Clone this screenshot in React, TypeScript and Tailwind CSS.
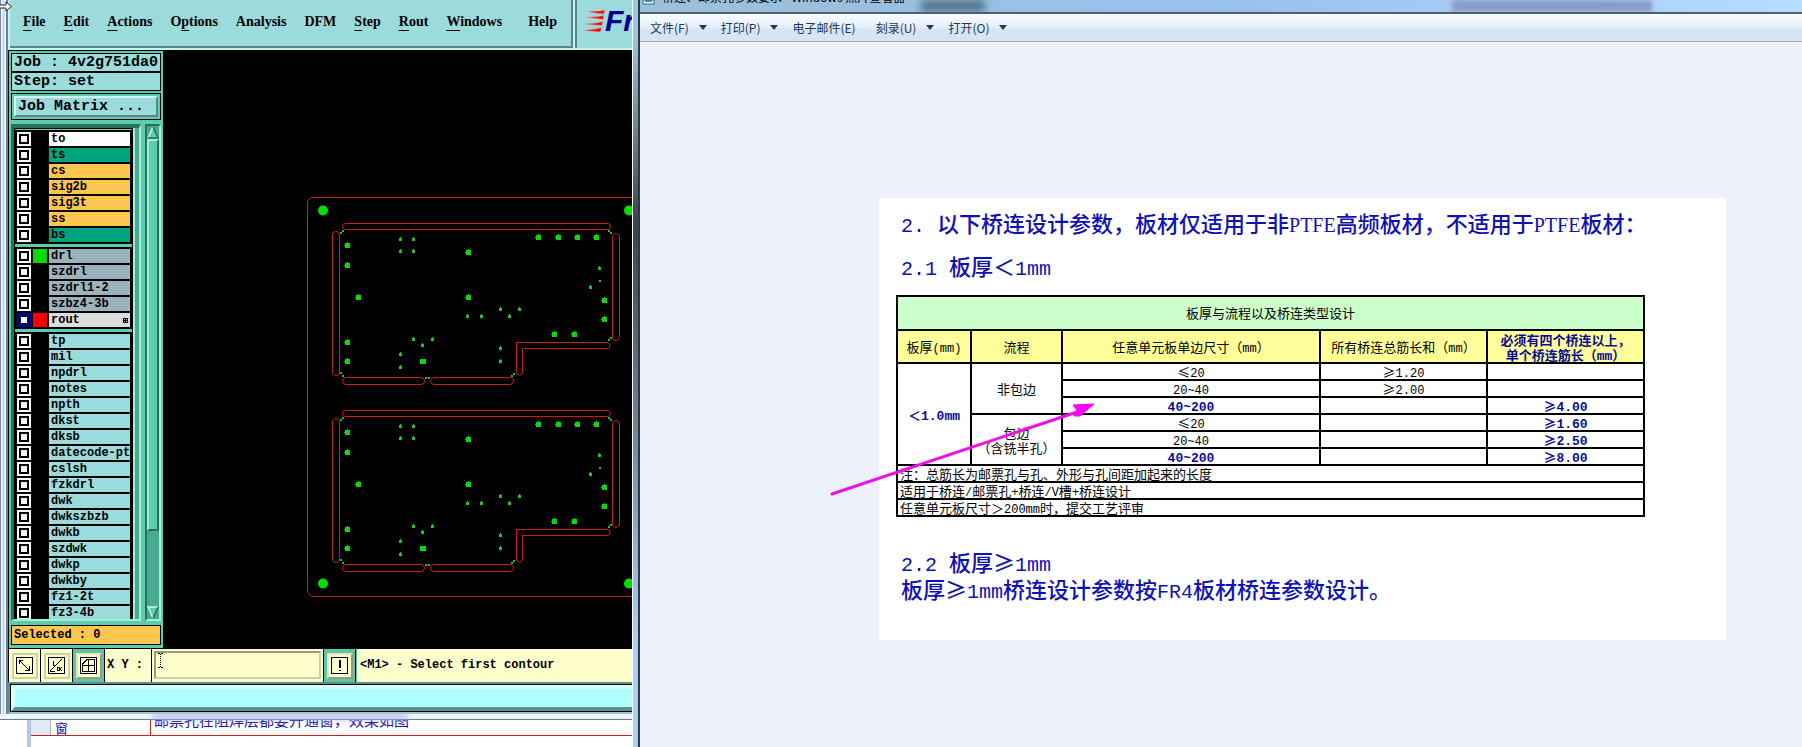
import React from "react";

const MONO = "font-['Liberation_Mono',monospace]";
const CJK = "font-['Noto_Sans_CJK_SC',sans-serif]";

type Layer = { name: string; fill: string; swatch?: string; active?: boolean };

const TEAL = "bg-[#00a47c]";
const AMBER = "bg-[#fdc64f]";
const SLATE = "bg-[#9cb3bd]";
const AQUA = "bg-[#9cdbdb]";

const groups: Layer[][] = [
  [
    { name: "to", fill: "bg-white" },
    { name: "ts", fill: TEAL },
    { name: "cs", fill: AMBER },
    { name: "sig2b", fill: AMBER },
    { name: "sig3t", fill: AMBER },
    { name: "ss", fill: AMBER },
    { name: "bs", fill: TEAL },
  ],
  [
    { name: "drl", fill: SLATE, swatch: "bg-[#00dc00]" },
    { name: "szdrl", fill: SLATE },
    { name: "szdrl1-2", fill: SLATE },
    { name: "szbz4-3b", fill: SLATE },
    { name: "rout", fill: "bg-[#dcdcdc]", swatch: "bg-[#fb0000]", active: true },
  ],
  [
    "tp", "mil", "npdrl", "notes", "npth", "dkst", "dksb", "datecode-ptc", "cslsh",
    "fzkdrl", "dwk", "dwkszbzb", "dwkb", "szdwk", "dwkp", "dwkby", "fz1-2t", "fz3-4b",
  ].map((name) => ({ name, fill: AQUA })),
];

const menus: { label: string; key?: number; extra?: string }[] = [
  { label: "File", key: 0 },
  { label: "Edit", key: 0 },
  { label: "Actions", key: 0 },
  { label: "Options", key: 1 },
  { label: "Analysis" },
  { label: "DFM" },
  { label: "Step", key: 0 },
  { label: "Rout", key: 0 },
  { label: "Windows", key: 0 },
  { label: "Help", extra: "ml-2" },
];

function MenuLabel({ label, at }: { label: string; at?: number }) {
  if (at === undefined) return <>{label}</>;
  return (
    <>
      {label.slice(0, at)}
      <span className="underline decoration-1 underline-offset-4 [text-decoration-skip-ink:none]">{label[at]}</span>
      {label.slice(at + 1)}
    </>
  );
}

function MenuBar() {
  return (
    <header className="flex h-[50px] shrink-0 bg-[#9cdbdb]">
      <div className="flex grow border-b-2 border-l-2 border-[#c6f3f3]">
        <nav className="flex grow gap-[18px] border-r-2 border-b-2 border-[#5c8686] pt-2.5 pl-[13px]">
          {menus.map((m) => (
            <button
              key={m.label}
              className={`h-6 font-['Liberation_Serif',serif] text-[14px] leading-6 font-bold text-black ${m.extra ?? ""}`}
            >
              <MenuLabel label={m.label} at={m.key} />
            </button>
          ))}
        </nav>
      </div>
      <div className="flex w-[59px] shrink-0 border-b-2 border-l-2 border-[#c6f3f3]">
        <div className="flex grow items-start overflow-hidden border-l-2 border-[#5c8686] pl-1.5">
          <svg viewBox="0 0 22 24" className="mt-[9px] h-6 w-[22px] shrink-0" aria-hidden="true">
            <g fill="#fb0a0a" stroke="#d8b8c4" strokeWidth="0.4">
              <path d="M4 2.5 16 2 22 1 21 5 15 4.5Z" />
              <path d="M3 8.5 14 7.5 21 6.5 20 10.5 13 9.5Z" />
              <path d="M1 15 13 14 20 12.5 19 16.5 12 16Z" />
              <path d="M0 21.5 12 20 18.5 18.5 17.5 23 11 22.5Z" />
            </g>
          </svg>
          <span className="font-['Liberation_Sans',sans-serif] text-[30px] leading-[42px] font-bold text-[#00008c] italic">
            Fr
          </span>
        </div>
      </div>
    </header>
  );
}

function LayerRow({ layer }: { layer: Layer }) {
  return (
    <label className="flex h-4 items-center gap-0.5">
      <span className={`flex size-3.5 shrink-0 items-center justify-center ${layer.active ? "bg-[#00009c]" : "bg-white"}`}>
        <input
          type="checkbox"
          defaultChecked={layer.active}
          className={`size-2.5 appearance-none border-2 bg-white ${layer.active ? "border-[#000050]" : "border-black"}`}
        />
      </span>
      <span className={`h-3.5 w-3.5 shrink-0 ${layer.swatch ?? "bg-black"}`} />
      <span
        className={`flex h-3.5 min-w-0 grow items-center justify-between overflow-hidden pl-0.5 text-[12px] leading-3.5 font-bold whitespace-nowrap text-black ${layer.fill}`}
      >
        {layer.name}
        {layer.active && (
          <svg viewBox="0 0 5 5" className="mr-0.5 size-[5px] shrink-0" shapeRendering="crispEdges" aria-hidden="true">
            <path d="M.5.5h4v4h-4zM2.5 0v5M0 2.5h5" fill="none" stroke="#000" />
          </svg>
        )}
      </span>
    </label>
  );
}

function Sidebar() {
  return (
    <aside className={`flex w-[155px] shrink-0 flex-col border-t border-l border-black bg-[#5ccdad] px-0.5 pt-0.5 pb-[3px] ${MONO}`}>
      <div className="shrink-0 border border-black bg-[#9cdbdb] text-[15px] leading-[17px] font-bold whitespace-pre text-black">
        <p className="border-b-2 border-black pl-0.5">Job : 4v2g751da0</p>
        <p className="pl-0.5">Step: set</p>
      </div>
      <div className="mt-0.5 shrink-0 border border-black p-0.5">
        <button className="block w-full border-2 border-t-[#d2f4f4] border-r-[#5c8686] border-b-[#5c8686] border-l-[#d2f4f4] bg-[#9cdbdb] pl-0.5 text-left text-[15px] leading-[17px] font-bold text-black">
          Job Matrix ...
        </button>
      </div>

      <div className="mt-1 flex min-h-0 grow">
        <div className="flex min-w-0 grow border-t-4 border-r-2 border-b-2 border-l-3 border-t-[#2d6f5d] border-r-[#a4eed8] border-b-[#a4eed8] border-l-[#2d6f5d]">
          <div className="min-w-0 grow overflow-hidden border-x border-t border-black pt-px">
            <div className="flex h-0 flex-col gap-[3px]">
              {groups.map((g, i) => (
                <div key={i} className="shrink-0 border-x-2 border-y border-black bg-black">
                  {g.map((l) => (
                    <LayerRow key={l.name} layer={l} />
                  ))}
                </div>
              ))}
            </div>
          </div>
          <div className="w-1.5 border-l-2 border-[#a4eed8] bg-[#48ab91]" />
        </div>
        <div className="ml-1 flex w-4 shrink-0 flex-col border-2 border-t-[#2d6f5d] border-r-[#a4eed8] border-b-[#a4eed8] border-l-[#2d6f5d] bg-[#48ab91]">
          <svg viewBox="0 0 12 13" className="h-[13px] w-3" aria-hidden="true">
            <path d="M6 1 11 12H1Z" fill="#5ccdad" />
            <path d="M6 1 1 12" stroke="#c6f7e8" strokeWidth="1.5" />
            <path d="M6 1 11 12H1" fill="none" stroke="#2d6f5d" strokeWidth="1.5" />
          </svg>
          <div className="flex grow flex-col">
            <div className="h-[84%] border-2 border-t-[#a4eed8] border-r-[#2d6f5d] border-b-[#2d6f5d] border-l-[#a4eed8] bg-[#5ccdad]" />
          </div>
          <svg viewBox="0 0 12 13" className="h-[13px] w-3" aria-hidden="true">
            <path d="M6 12 11 1H1Z" fill="#5ccdad" />
            <path d="M6 12 1 1H11" fill="none" stroke="#c6f7e8" strokeWidth="1.5" />
            <path d="M11 1 6 12" stroke="#2d6f5d" strokeWidth="1.5" />
          </svg>
        </div>
      </div>

      <p className="mt-1 shrink-0 border border-black bg-[#fdc64f] pl-0.5 text-[12px] leading-[18px] font-bold text-black">
        Selected : 0
      </p>
    </aside>
  );
}

const bigDots = [
  [347, 245], [347, 265], [358, 297], [468, 252], [468, 297], [538, 237], [558, 237], [577, 237],
  [596, 237], [604, 300], [604, 319], [554, 334], [574, 334], [347, 342], [347, 361],
];
const smallDots = [
  [400, 239], [413, 239], [400, 251], [413, 251], [599, 268], [590, 287], [467, 316], [481, 316],
  [500, 309], [519, 309], [509, 316], [413, 339], [432, 339], [422, 345], [400, 354], [400, 367],
  [500, 348], [500, 361],
];
const tinyDots = [
  [340, 232], [342, 230], [608, 230], [610, 232], [340, 372], [342, 375], [425, 377], [428, 377],
  [511, 375], [513, 373], [608, 339], [610, 337], [599, 280],
];

function Board() {
  return (
    <>
      <g fill="none" stroke="#c81e1e">
        <rect x="342.5" y="223.5" width="268" height="6" rx="3" />
        <rect x="332.5" y="231.5" width="7" height="144" rx="3.5" />
        <rect x="612.5" y="233.5" width="7" height="107" rx="3.5" />
        <rect x="342.5" y="377.5" width="82" height="7" rx="3.5" />
        <rect x="430.5" y="377.5" width="83" height="7" rx="3.5" />
        <path d="M516.5 342.5H607a3 3 0 0 1 0 6H522.5V372a3 3 0 0 1-6 0Z" />
      </g>
      <g fill="#0ed60e" shapeRendering="crispEdges">
        {bigDots.map(([x, y]) => (
          <path key={`${x}-${y}`} d={`M${x - 2} ${y - 2}h2v-1h1v1h2v5h-5v-2h-1v-1h1z`} />
        ))}
        <rect x="420" y="359" width="6" height="5" />
      </g>
      <g fill="#22c322" shapeRendering="crispEdges">
        {smallDots.map(([x, y]) => (
          <path key={`${x}-${y}`} d={`M${x - 1} ${y - 1}h1v-1h1v1h1v3h-3z`} />
        ))}
        {tinyDots.map(([x, y]) => (
          <rect key={`${x}-${y}`} x={x} y={y} width="2" height="2" />
        ))}
      </g>
    </>
  );
}

function BoardCanvas() {
  return (
    <main className="min-w-0 grow overflow-hidden bg-black">
      <svg viewBox="163 50 469 598" preserveAspectRatio="xMinYMin slice" className="block h-full w-full" role="img" aria-label="Rout layer">
        <path d="M640 197.5H311l-3.5 3.5V592l4 4.5H640" fill="none" stroke="#c81e1e" />
        <g fill="#00e000">
          <circle cx="323" cy="210.5" r="5" />
          <circle cx="629" cy="210.5" r="5" />
          <circle cx="323" cy="583.5" r="5" />
          <circle cx="629" cy="583.5" r="5" />
        </g>
        <Board />
        <g transform="translate(0 187)">
          <Board />
        </g>
      </svg>
    </main>
  );
}

function ToolButton({ label, framed, children }: { label: string; framed?: boolean; children: React.ReactNode }) {
  return (
    <button
      aria-label={label}
      className={`flex h-[33px] w-8 shrink-0 items-center justify-center border-r border-black ${framed ? "bg-[#5cc5a5]" : "bg-[#ffffce]"}`}
    >
      <span
        className={`flex size-[26px] items-center justify-center border-2 bg-[#ffffce] ${
          framed ? "border-t-[#e4e4c0] border-r-[#9c9c7c] border-b-[#9c9c7c] border-l-[#e4e4c0]" : "border-[#d0d0a4]"
        }`}
      >
        <svg viewBox="0 0 17 17" className="size-[17px]" fill="none" stroke="#000" shapeRendering="crispEdges" aria-hidden="true">
          <rect x="0.5" y="0.5" width="16" height="16" />
          {children}
        </svg>
      </span>
    </button>
  );
}

function CommandBar() {
  return (
    <div className={`flex h-[34px] shrink-0 border-t border-l border-black bg-[#ffffce] text-[12px] font-bold text-black ${MONO}`}>
      <ToolButton label="Scale">
        <path d="M3 3 13 13M3.5 7V3.5H7M13.5 9V13.5H9" />
      </ToolButton>
      <ToolButton label="Slope">
        <path d="M2 14 14 2M2 14.5H7M5.5 4v4h2M9.5 10.5h2v3h-2zM14 10l-2 2 2 2" />
      </ToolButton>
      <ToolButton label="Grid" framed>
        <path d="M2.5 14.5H14.5V2.5H7L2.5 7Z" />
        <path d="M8.5 2V15M2 8.5H15" />
      </ToolButton>
      <label htmlFor="xy" className="w-[46px] shrink-0 pl-0.5 leading-[32px] whitespace-pre">
        X Y :
      </label>
      <div className="relative w-[173px] shrink-0 border-x border-black bg-[#ffffce] p-0.5">
        <input
          id="xy"
          className="block h-[28px] w-full border-2 border-t-[#9c9c7c] border-r-[#d0d0a4] border-b-[#d0d0a4] border-l-[#9c9c7c] bg-[#ffffce] px-1 outline-none"
        />
        <svg viewBox="0 0 5 15" className="pointer-events-none absolute top-1 left-1.5 h-[15px] w-[5px]" shapeRendering="crispEdges" aria-hidden="true">
          <path d="M0 .5h2M3 .5h2M0 14.5h2M3 14.5h2" stroke="#000" />
          <path d="M2.5 1v13" stroke="#000" strokeDasharray="1 1" />
        </svg>
      </div>
      <ToolButton label="Alert" framed>
        <path d="M8 3h1.5v8H8zM8 12.5h1.5v1.5H8z" fill="#000" stroke="none" />
      </ToolButton>
      <output className="min-w-0 grow truncate border-l border-[#5cc5a5] pl-[3px] leading-[32px]">&lt;M1&gt; - Select first contour</output>
    </div>
  );
}

function Editor() {
  return (
    <section className="relative flex min-h-0 grow">
      <div className="w-2 shrink-0 border-r-2 border-l border-r-[#6c8490] border-l-[#7c8ca4] bg-linear-to-r from-white via-[#bcd8f6] to-white" />
      <div className="flex min-w-0 grow flex-col">
        <MenuBar />
        <div className="flex min-h-0 grow">
          <Sidebar />
          <BoardCanvas />
        </div>
        <CommandBar />
        <div className="shrink-0 border-y-2 border-l-2 border-[#5c9090] border-b-[#9cc8cc]">
          <div className="border-y border-l border-black">
            <div className="h-[26px] border-4 border-r-0 border-t-[#d4ffff] border-b-[#5c9090] border-l-[#d4ffff] bg-[#b0ffff]" />
          </div>
        </div>
      </div>
      <svg viewBox="0 0 12 11" className="absolute top-px left-0 h-[11px] w-3" aria-hidden="true">
        <path d="M0 4h6V1l5.500 4.500L6 10V7H0" fill="#fff" stroke="#222" />
      </svg>
    </section>
  );
}

function DocumentStrip() {
  return (
    <section className={`shrink-0 overflow-hidden bg-white ${CJK}`}>
      <div className="h-1.5 border-b border-[#6c7c8c] bg-[#eef6fc] pl-[152px]">
        <div className="h-full w-64 bg-[#a9b4f0] blur-[3px]" />
      </div>
      <div className="flex h-[27px]">
        <div className="w-[31px] border-r-4 border-[#b4c6e4]" />
        <div className="flex h-4 grow border-b border-[#cc1c1c] text-[#1414a8]">
          <div className="w-5 shrink-0 border-r border-[#a4b4c8] bg-[#e2eaf6]" />
          <div className="flex w-[100px] shrink-0 items-end overflow-hidden border-r border-[#cc1c1c] pl-1 text-[13px] leading-[15px]">窗</div>
          <div className="flex min-w-0 items-end overflow-hidden pl-[3px]">
            <p className="mb-1 shrink-0 text-[15px] leading-[22px] whitespace-nowrap">邮票孔在阻焊层都要开通窗，效果如图</p>
          </div>
        </div>
      </div>
    </section>
  );
}

const viewerMenus = [
  { label: "文件(F)", drop: true },
  { label: "打印(P)", drop: true },
  { label: "电子邮件(E)", drop: false },
  { label: "刻录(U)", drop: true },
  { label: "打开(O)", drop: true },
];

const L = ({ children }: { children: React.ReactNode }) => (
  <span className={`text-[20px] leading-[0px] ${MONO}`}>{children}</span>
);
const S = ({ children }: { children: React.ReactNode }) => (
  <span className="font-['Liberation_Serif',serif] text-[20px] leading-[0px]">{children}</span>
);
const N = ({ children }: { children: React.ReactNode }) => (
  <span className={`text-[12px] leading-[0px] ${MONO}`}>{children}</span>
);
const B = ({ children }: { children: React.ReactNode }) => (
  <span className={`text-[13px] leading-[0px] ${MONO}`}>{children}</span>
);

const CELL = "h-[17px] border-2 border-black p-0 leading-[15px]";
const BOLD = `${CELL} font-bold text-[#0a0a96]`;

function ParameterTable() {
  return (
    <table className="w-[749px] table-fixed border-collapse bg-white text-center text-[13px] font-normal text-black">
      <colgroup>
        <col className="w-[74px]" />
        <col className="w-[91px]" />
        <col className="w-[258px]" />
        <col className="w-[167px]" />
        <col />
      </colgroup>
      <thead>
        <tr className="bg-[#ccffcc]">
          <th colSpan={5} className="h-[34px] border-2 border-black p-0 font-normal">
            板厚与流程以及桥连类型设计
          </th>
        </tr>
        <tr className="bg-[#ffff99]">
          <th className="h-[33px] border-2 border-black p-0 font-normal">板厚<N>(mm)</N></th>
          <th className="border-2 border-black p-0 font-normal">流程</th>
          <th className="border-2 border-black p-0 font-normal">任意单元板单边尺寸（<N>mm</N>）</th>
          <th className="border-2 border-black p-0 font-normal">所有桥连总筋长和（<N>mm</N>）</th>
          <th className="border-2 border-black p-0 leading-[15px] font-bold whitespace-nowrap text-[#0a0a96]">
            必须有四个桥连以上，<br />单个桥连筋长（<B>mm</B>）
          </th>
        </tr>
      </thead>
      <tbody>
        <tr>
          <td rowSpan={6} className={BOLD}>＜<B>1.0mm</B></td>
          <td rowSpan={3} className={CELL}>非包边</td>
          <td className={CELL}>≤<N>20</N></td>
          <td className={CELL}>≥<N>1.20</N></td>
          <td className={CELL} />
        </tr>
        <tr>
          <td className={CELL}><N>20~40</N></td>
          <td className={CELL}>≥<N>2.00</N></td>
          <td className={CELL} />
        </tr>
        <tr>
          <td className={BOLD}><B>40~200</B></td>
          <td className={CELL} />
          <td className={BOLD}>≥<B>4.00</B></td>
        </tr>
        <tr>
          <td rowSpan={3} className={CELL}>包边<br />（含铣半孔）</td>
          <td className={CELL}>≤<N>20</N></td>
          <td className={CELL} />
          <td className={BOLD}>≥<B>1.60</B></td>
        </tr>
        <tr>
          <td className={CELL}><N>20~40</N></td>
          <td className={CELL} />
          <td className={BOLD}>≥<B>2.50</B></td>
        </tr>
        <tr>
          <td className={BOLD}><B>40~200</B></td>
          <td className={CELL} />
          <td className={BOLD}>≥<B>8.00</B></td>
        </tr>
        <tr>
          <td colSpan={5} className={`${CELL} text-left`}><span className="pl-0.5">注：总筋长为邮票孔与孔、外形与孔间距加起来的长度</span></td>
        </tr>
        <tr>
          <td colSpan={5} className={`${CELL} text-left`}>
            <span className="pl-0.5">适用于桥连<N>/</N>邮票孔<N>+</N>桥连<N>/V</N>槽<N>+</N>桥连设计</span>
          </td>
        </tr>
        <tr>
          <td colSpan={5} className={`${CELL} text-left`}>
            <span className="pl-0.5">任意单元板尺寸＞<N>200mm</N>时，提交工艺评审</span>
          </td>
        </tr>
      </tbody>
    </table>
  );
}

function Viewer() {
  return (
    <section className={`flex min-w-0 grow flex-col border-l-2 border-[#2c3a48] bg-[#edf2fa] ${CJK}`}>
      <header className="flex h-3 shrink-0 items-end overflow-hidden bg-linear-to-r from-[#9cc0d8] via-[#98c0ec] to-[#b8dcff]">
        <svg viewBox="0 0 14 12" className="ml-0.5 h-3 w-3.5 shrink-0" aria-hidden="true">
          <path d="M1 0h11v4H1z" fill="#f4fbff" stroke="#2c6498" />
          <path d="M3 0h7v2H3z" fill="#3c84bc" />
        </svg>
        <h1 className="relative bottom-[7px] ml-1.5 shrink-0 text-[12px] leading-4 whitespace-nowrap text-black">
          桥连、邮票孔参数要求 - Windows 照片查看器
        </h1>
        <div className="ml-4 h-3 w-16 shrink-0 bg-[#4f7088] blur-[4px]" />
        <div className="mr-[150px] ml-auto h-3 w-[200px] shrink-0 bg-[#8c9cc8] blur-[2px]" />
      </header>
      <nav className="flex h-[30px] shrink-0 items-center border-t-2 border-b border-t-[#4c6078] border-b-[#a0acbc] bg-linear-to-b from-[#f8fcff] from-0% via-[#e4eef9] via-50% to-[#d6e4f3] to-55% pl-2.5 text-[12px] text-[#1e395b]">
        {viewerMenus.map((m) => (
          <button key={m.label} className={`flex items-center gap-2.5 whitespace-nowrap ${m.drop ? "mr-3.5" : "mr-5"}`}>
            {m.label}
            {m.drop && (
              <svg viewBox="0 0 8 5" className="h-[5px] w-2" fill="#1e395b" aria-hidden="true">
                <path d="M0 0h8L4 5z" />
              </svg>
            )}
          </button>
        ))}
      </nav>
      <div className="grow overflow-hidden pt-[156px] pl-[239px]">
        <article className="relative h-[442px] w-[847px] bg-white pt-[7px] pl-[17px] text-[22px] font-medium text-[#1010b8]">
          <p className="pl-[5px] leading-[34px] whitespace-pre"><L>2. </L>以下桥连设计参数，板材仅适用于非<S>PTFE</S>高频板材，不适用于<S>PTFE</S>板材：</p>
          <p className="mt-2.5 mb-3.5 pl-[5px] leading-[32px] whitespace-pre"><L>2.1 </L>板厚＜<L>1mm</L></p>
          <ParameterTable />
          <p className="mt-[31px] pl-[5px] leading-[27px] whitespace-pre"><L>2.2 </L>板厚≥<L>1mm</L></p>
          <p className="pl-[5px] leading-[27px]">板厚≥<L>1mm</L>桥连设计参数按<L>FR4</L>板材桥连参数设计。</p>
          <svg viewBox="0 0 280 110" className="absolute top-[196px] -left-[57px] h-[110px] w-[280px]" aria-hidden="true">
            <path d="M10 100 255 18" stroke="#ee10e8" strokeWidth="3" strokeLinecap="round" />
            <path d="M272 10 251 11 255 16 252 22 258 22Z" fill="#fb00fb" stroke="#fb00fb" />
          </svg>
        </article>
      </div>
    </section>
  );
}

export default function App() {
  return (
    <div className="flex h-screen overflow-hidden bg-white">
      <div className="flex w-[632px] shrink-0 flex-col overflow-hidden">
        <Editor />
        <DocumentStrip />
      </div>
      <div className="w-1.5 shrink-0 border-l border-white bg-linear-to-b from-[#9cc8dc] from-5% via-[#3c4448] via-30% to-[#a8d0f4] to-85%" />
      <Viewer />
    </div>
  );
}
